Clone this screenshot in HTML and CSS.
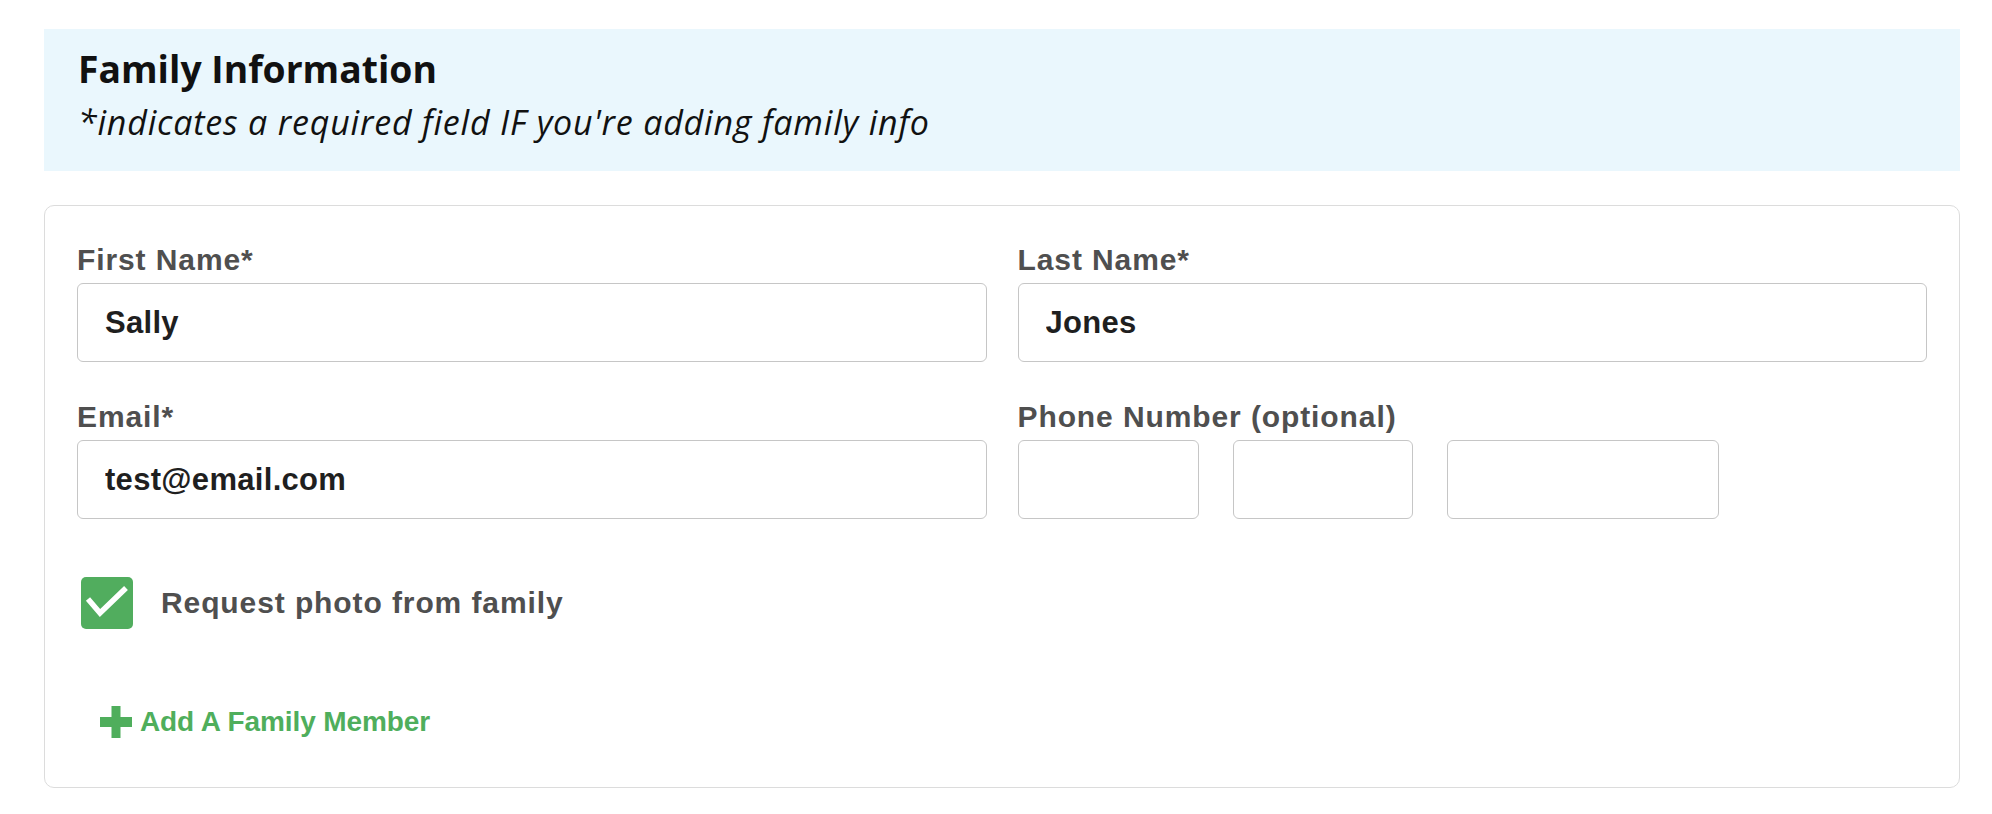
FILE: index.html
```html
<!DOCTYPE html>
<html lang="en">
<head>
<meta charset="utf-8">
<title>Family Information</title>
<link rel="stylesheet" href="styles.css">
</head>
<body>
<main class="page">
  <header class="intro">
    <h1 class="intro-title">Family Information</h1>
    <p class="intro-note">*indicates a required field IF you're adding family info</p>
  </header>

  <section class="card">
    <div class="grid">
      <div class="field">
        <label class="label" for="first">First Name*</label>
        <input class="input" id="first" type="text" value="Sally">
      </div>
      <div class="field">
        <label class="label" for="last">Last Name*</label>
        <input class="input" id="last" type="text" value="Jones">
      </div>
      <div class="field">
        <label class="label" for="email">Email*</label>
        <input class="input" id="email" type="text" value="test@email.com">
      </div>
      <div class="field">
        <label class="label" for="ph1">Phone Number (optional)</label>
        <div class="phone">
          <input class="input phone-a" id="ph1" type="text">
          <input class="input phone-b" type="text">
          <input class="input phone-c" type="text">
        </div>
      </div>
    </div>

    <div class="check-row">
      <span class="checkbox">
        <svg viewBox="0 0 52 52" width="52" height="52" aria-hidden="true">
          <path d="M7 22 L19 36 L45 11" fill="none" stroke="#fff" stroke-width="5.5" stroke-linecap="butt" stroke-linejoin="miter"/>
        </svg>
      </span>
      <span class="check-label">Request photo from family</span>
    </div>

    <a class="add-link" href="#">
      <svg class="plus" viewBox="0 0 32 32" width="32" height="32" aria-hidden="true">
        <rect x="11.5" y="0" width="9" height="32" fill="#4fae5c"/>
        <rect x="0" y="11" width="32" height="10" fill="#4fae5c"/>
      </svg>
      <span>Add A Family Member</span>
    </a>
  </section>
</main>
</body>
</html>
```

FILE: styles.css
```css
html, body {
  margin: 0;
  padding: 0;
  background: #ffffff;
}

.page {
  padding: 29px 32px 0 44px;
  width: 1916px;
}

.intro {
  background: #eaf7fd;
  padding: 18px 34px 28px;
  height: 142px;
  box-sizing: border-box;
}

.intro-title {
  margin: 0;
  font-family: "Open Sans", "Noto Sans", sans-serif;
  font-weight: 700;
  font-size: 37.3px;
  line-height: 44px;
  color: #111111;
}

.intro-note {
  margin: 11px 0 0;
  font-family: "Open Sans", "Noto Sans", sans-serif;
  font-style: italic;
  font-size: 34px;
  line-height: 40px;
  letter-spacing: 0.8px;
  color: #111111;
}

.card {
  margin-top: 34px;
  border: 1px solid #dcdcdc;
  border-radius: 10px;
  padding: 36px 32px 51px 32px;
  height: 583px;
  box-sizing: border-box;
}

.grid {
  display: grid;
  grid-template-columns: 1fr 1fr;
  column-gap: 31px;
  row-gap: 37px;
}

.field {
  display: flex;
  flex-direction: column;
  gap: 5px;
}

.label {
  font-family: "Liberation Sans", Arial, sans-serif;
  font-weight: 700;
  font-size: 30px;
  line-height: 36px;
  letter-spacing: 0.9px;
  color: #4f4f4f;
}

.input {
  box-sizing: border-box;
  height: 79px;
  width: 100%;
  margin: 0;
  border: 1px solid #c6c6c6;
  border-radius: 6px;
  padding: 0 20px 0 27px;
  background: #ffffff;
  font-family: "Liberation Sans", Arial, sans-serif;
  font-weight: 700;
  font-size: 31px;
  letter-spacing: 0.3px;
  color: #1f1f1f;
  outline: none;
}

.phone {
  display: flex;
  gap: 34px;
}

.phone .phone-a { width: 181px; }
.phone .phone-b { width: 180px; }
.phone .phone-c { width: 272px; }

.check-row {
  display: flex;
  align-items: center;
  gap: 28px;
  margin-top: 58px;
  padding-left: 4px;
}

.checkbox {
  display: block;
  width: 52px;
  height: 52px;
  border-radius: 5px;
  background: #51ad5e;
}

.checkbox svg {
  display: block;
}

.check-label {
  font-family: "Liberation Sans", Arial, sans-serif;
  font-weight: 700;
  font-size: 30px;
  line-height: 36px;
  letter-spacing: 0.9px;
  color: #4f4f4f;
}

.add-link {
  display: flex;
  align-items: center;
  gap: 8px;
  margin-top: 77px;
  margin-left: 23px;
  width: max-content;
  text-decoration: none;
  font-family: "Liberation Sans", Arial, sans-serif;
  font-weight: 700;
  font-size: 28px;
  line-height: 32px;
  letter-spacing: -0.1px;
  color: #4fae5c;
}

.plus {
  display: block;
}
```
